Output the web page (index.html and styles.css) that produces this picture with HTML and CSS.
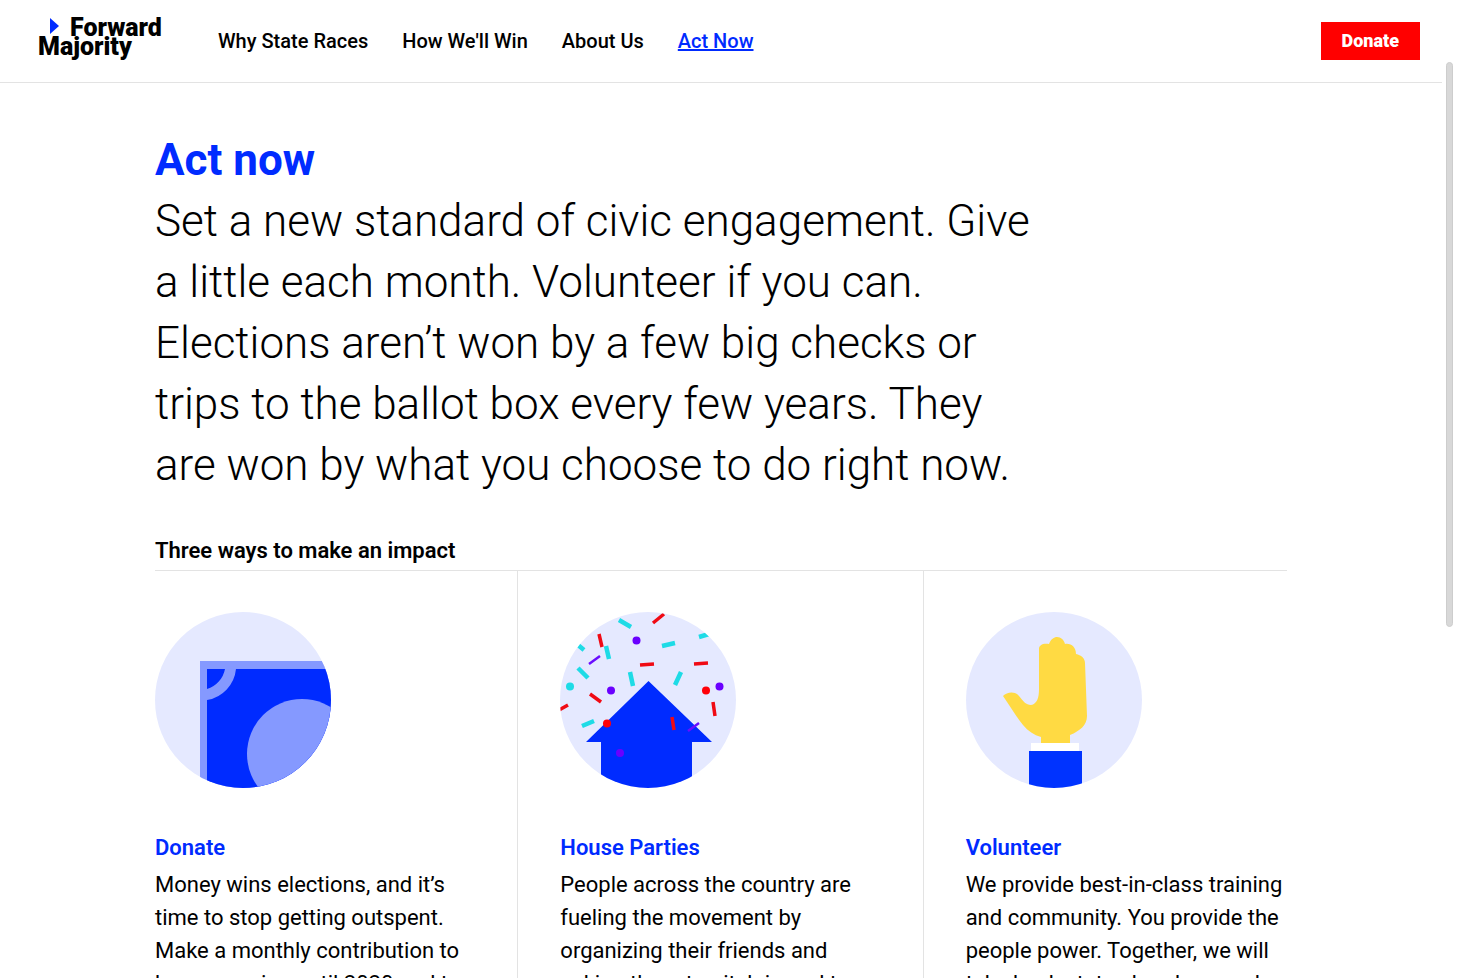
FILE: index.html
```html
<!DOCTYPE html>
<html lang="en">
<head>
  <meta charset="UTF-8">
  <meta name="viewport" content="width=device-width, initial-scale=1">
  <title>Act Now | Forward Majority</title>
  <link rel="stylesheet" href="styles.css">
</head>
<body>
  <header class="header">
    <a class="logo" href="#" aria-label="Forward Majority">
      <span class="logo-top">
        <svg class="logo-arrow" viewBox="0 0 9 16" aria-hidden="true"><path d="M0 0L9 8L0 16Z"/></svg>
        Forward
      </span>
      <span class="logo-bottom">Majority</span>
    </a>
    <nav class="nav">
      <a href="#">Why State Races</a>
      <a href="#">How We'll Win</a>
      <a href="#">About Us</a>
      <a class="active" href="#">Act Now</a>
    </nav>
    <button class="donate-btn" type="button">Donate</button>
  </header>

  <main class="content">
    <h1>Act now</h1>
    <p class="intro">Set a new standard of civic engagement. Give a little each month. Volunteer if you can. Elections aren’t won by a few big checks or trips to the ballot box every few years. They are won by what you choose to do right now.</p>

    <h2>Three ways to make an impact</h2>
    <div class="ways">
      <section class="way">
        <svg class="way-icon" viewBox="0 0 176 176" aria-hidden="true">
          <clipPath id="disc"><circle cx="88" cy="88" r="88"/></clipPath>
          <g clip-path="url(#disc)">
            <rect width="176" height="176" fill="#e5e9ff"/>
            <rect x="45" y="49" width="140" height="140" fill="#8599ff"/>
            <rect x="52" y="57" width="140" height="140" fill="#002bff"/>
            <path d="M81 57A35 35 0 0 1 52 88V77A26 26 0 0 0 70 57Z" fill="#8599ff"/>
            <circle cx="147" cy="142" r="55" fill="#8599ff"/>
          </g>
        </svg>
        <h3><a href="#">Donate</a></h3>
        <p>Money wins elections, and it’s time to stop getting outspent. Make a monthly contribution to keep us going until 2020 and to</p>
      </section>

      <section class="way">
        <svg class="way-icon" viewBox="0 0 176 176" aria-hidden="true">
          <g clip-path="url(#disc)">
            <rect width="176" height="176" fill="#e5e9ff"/>
            <path d="M88.500 69L152 130H132V176H41V130H26Z" fill="#002bff"/>
            <g fill="none" stroke-width="4.500" stroke="#1edbe6">
              <path d="M59 8L71 15M18 33L24 38M46 34L49 47M102 34L115 31M139 25L149 22M18 56L28 66M70 60L73 74M121 60L115 73M22 114L34 109"/>
            </g>
            <g fill="none" stroke-width="3.500" stroke="#f00a14">
              <path d="M93 11L104 2M39 22L42 35M80 53L94 52M134 52L148 51M30 82L41 90M-1 98L8 93M153 90L155 104M112 105L114 118"/>
            </g>
            <path d="M29 52L40 44M128 119L139 111" stroke="#6a0dff" stroke-width="2.500"/>
            <g fill="#6a00ff">
              <circle cx="76.500" cy="28.500" r="4"/>
              <circle cx="51" cy="78.500" r="4"/>
              <circle cx="159.500" cy="74.500" r="4"/>
              <circle cx="60" cy="141" r="4"/>
            </g>
            <g fill="#ff0009">
              <circle cx="146" cy="78.500" r="4"/>
              <circle cx="47" cy="111.500" r="4"/>
            </g>
            <circle cx="10" cy="74.500" r="4" fill="#1edbe6"/>
          </g>
        </svg>
        <h3><a href="#">House Parties</a></h3>
        <p>People across the country are fueling the movement by organizing their friends and asking them to pitch in and to</p>
      </section>

      <section class="way">
        <svg class="way-icon" viewBox="0 0 176 176" aria-hidden="true">
          <g clip-path="url(#disc)">
            <rect width="176" height="176" fill="#e5e9ff"/>
            <path d="M75 132V125C68 123 62 119 57 113C49 103 44 94 37 84C41 80 49 79 53 84C57 89 60 93 65 93C71 92 73 86 73 77V37C73 33 77 31 83 32C85 27 88 25 91 25C95 25 98 28 99 32C105 31 110 35 110 42C115 43 119 46 119 51L121 104C121 113 114 119 104 123V132Z" fill="#ffda43"/>
            <rect x="65" y="131" width="48" height="9" fill="#fff"/>
            <rect x="63" y="139" width="53" height="40" fill="#0033ff"/>
          </g>
        </svg>
        <h3><a href="#">Volunteer</a></h3>
        <p>We provide best-in-class training and community. You provide the people power. Together, we will take back state chambers and</p>
      </section>
    </div>
  </main>

  <div class="scroll-thumb"></div>
</body>
</html>
```
FILE: styles.css
```css
* {
  box-sizing: border-box;
}

body {
  margin: 0;
  padding-right: 15px;
  height: 100vh;
  overflow: hidden;
  font-family: Roboto, "Liberation Sans", sans-serif;
  color: #000;
  background: #fff;
}

a {
  color: inherit;
  text-decoration: none;
}

.header {
  display: flex;
  align-items: center;
  height: 83px;
  padding: 0 22px 0 38px;
  border-bottom: 1px solid #e3e3e3;
}

.logo {
  width: 126px;
  margin-right: 54px;
  padding-bottom: 8px;
  font-size: 25px;
  font-weight: 900;
  line-height: 19px;
}

.logo-top,
.logo-bottom {
  display: flex;
}

.logo-top {
  gap: 11px;
  padding-left: 12px;
}

.logo-arrow {
  width: 9px;
  height: 16px;
  fill: #002bff;
}

.nav {
  display: flex;
  gap: 34px;
  font-size: 20px;
  font-weight: 500;
}

.nav .active {
  color: #002bff;
  text-decoration: underline;
}

.donate-btn {
  margin-left: auto;
  height: 38px;
  padding: 0 21px 2px;
  border: none;
  background: #f00;
  color: #fff;
  font: 900 18px Roboto, sans-serif;
  cursor: pointer;
}

.content {
  padding: 47px 155px 0;
}

h1 {
  margin: 0;
  font-size: 44px;
  font-weight: 700;
  line-height: 61px;
  color: #002bff;
}

.intro {
  max-width: 890px;
  margin: 0;
  font-size: 44px;
  font-weight: 300;
  line-height: 61px;
}

h2 {
  margin: 38px 0 0;
  padding-bottom: 3px;
  border-bottom: 1px solid #e3e3e3;
  font-size: 22px;
  font-weight: 600;
  line-height: 33px;
}

.ways {
  display: grid;
  grid-template-columns: repeat(3, 1fr);
  margin: 0 -42px;
}

.way {
  padding: 41px 42px 0;
}

.way:not(:last-child) {
  border-right: 1px solid #e3e3e3;
}

.way-icon {
  display: block;
  width: 176px;
  height: 176px;
  margin-bottom: 43px;
}

.way h3 {
  margin: 0 0 4px;
  font-size: 22px;
  font-weight: 600;
  line-height: 33px;
  color: #002bff;
}

.way p {
  margin: 0;
  font-size: 22px;
  line-height: 33px;
}

.scroll-thumb {
  position: fixed;
  top: 62px;
  right: 4px;
  width: 7px;
  height: 565px;
  border: 1px solid #cdcdcd;
  border-radius: 4px;
  background: #d8d8d8;
}
```
